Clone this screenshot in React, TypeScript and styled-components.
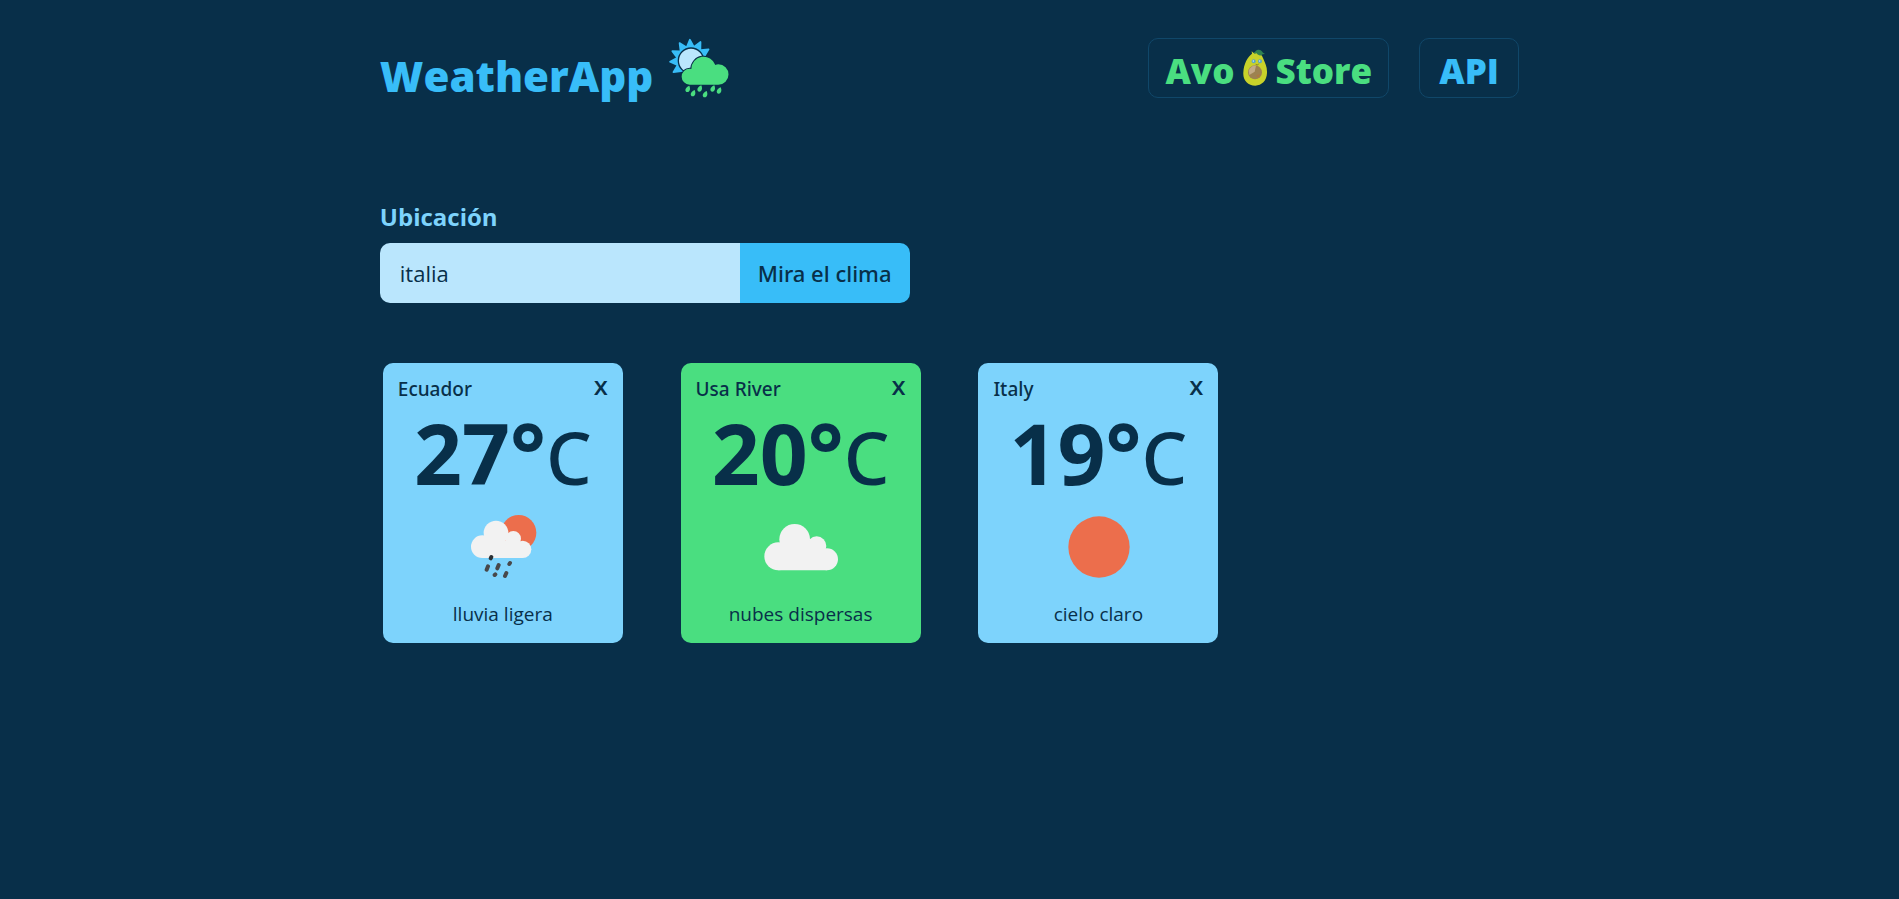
import React, { useState } from "react";
import styled, { createGlobalStyle } from "styled-components";

const sky = {
  night: "#082f49",
  line: "#104769",
  strong: "#38bdf8",
  soft: "#7dd3fc",
  pale: "#bae6fd",
  green: "#4ade80",
};

const mediumFont = `"Segoe UI", "Noto Sans", "Open Sans", sans-serif`;

const GlobalStyle = createGlobalStyle`
  *, *::before, *::after { box-sizing: border-box; }
  body {
    margin: 0;
    min-height: 100vh;
    background: ${sky.night};
    color: ${sky.night};
    font-family: "Segoe UI", "Open Sans", "Noto Sans", sans-serif;
  }
  button, input { font: inherit; color: inherit; border: 0; margin: 0; padding: 0; }
  h1, h2, p { margin: 0; }
`;

const Page = styled.div`
  width: 60%;
  min-width: 320px;
  margin: 0 auto;
`;

const Header = styled.header`
  display: flex;
  flex-wrap: wrap;
  justify-content: space-between;
  gap: 24px;
  padding-top: 38px;
`;

const Brand = styled.div`
  display: flex;
  gap: 16px;
`;

const Title = styled.h1`
  padding-top: 8px;
  color: ${sky.strong};
  font-size: 42px;
  font-weight: 800;
  line-height: 60px;
`;

const LogoArt = styled.svg`
  width: 60px;
  height: 60px;
`;

const Nav = styled.nav`
  display: flex;
  gap: 30px;
`;

const NavLink = styled.a<{ $color: string }>`
  display: flex;
  align-items: center;
  justify-content: center;
  gap: 8px;
  min-width: 100px;
  height: 60px;
  padding: 0 16px;
  border: 1px solid ${sky.line};
  border-radius: 10px;
  color: ${(p) => p.$color};
  font-size: 35px;
  font-weight: 800;
  line-height: 52px;
  text-decoration: none;
`;

const NavText = styled.span`
  padding-top: 6px;
`;

const AvocadoArt = styled.svg`
  width: 25px;
  height: 38px;
`;

const SearchForm = styled.form`
  display: flex;
  flex-direction: column;
  align-items: flex-start;
  padding-top: 95px;
`;

const Label = styled.label`
  color: ${sky.soft};
  font-size: 24px;
  font-weight: 700;
  line-height: 32px;
  padding-bottom: 10px;
`;

const Field = styled.div`
  display: flex;
  height: 60px;
  border-radius: 10px;
  overflow: hidden;
  font-size: 22px;
`;

const TextInput = styled.input`
  width: 360px;
  padding: 0 20px;
  background: ${sky.pale};
  font-weight: 400;
  outline: none;
`;

const Submit = styled.button`
  padding: 0 18px;
  background: ${sky.strong};
  font-family: ${mediumFont};
  font-weight: 500;
  cursor: pointer;
`;

const Cards = styled.main`
  display: grid;
  grid-template-columns: repeat(auto-fill, 240px);
  justify-content: space-between;
  gap: 40px;
  padding: 60px 3px;
`;

const Card = styled.article<{ $color: string }>`
  display: flex;
  flex-direction: column;
  align-items: center;
  min-height: 280px;
  padding: 12px 15px 15px;
  border-radius: 10px;
  background: ${(p) => p.$color};
`;

const CardTop = styled.div`
  display: flex;
  align-items: flex-start;
  justify-content: space-between;
  width: 100%;
  height: 28px;
`;

const City = styled.h2`
  font-family: ${mediumFont};
  font-size: 19px;
  font-weight: 500;
  line-height: 28px;
`;

const Close = styled.button`
  background: none;
  font-family: ${mediumFont};
  font-size: 26px;
  font-weight: 500;
  line-height: 20px;
  cursor: pointer;
`;

const Temperature = styled.p`
  font-size: 84px;
  font-weight: 700;
  line-height: 99px;
  white-space: nowrap;
`;

const Unit = styled.span`
  font-family: ${mediumFont};
  font-size: 72px;
  font-weight: 500;
`;

const WeatherArt = styled.svg`
  width: 80px;
  height: 80px;
`;

const Summary = styled.p`
  margin-top: auto;
  font-size: 19px;
  font-weight: 400;
  line-height: 28px;
`;

const rays = [-213, -183, -153, -123, -93, -63, -33].map((deg) => {
  const point = (r: number, a: number) => {
    const t = (a * Math.PI) / 180;
    return `${(93 + r * Math.cos(t)).toFixed(1)},${(92 + r * Math.sin(t)).toFixed(1)}`;
  };
  return `${point(43, deg - 14)} ${point(63, deg)} ${point(43, deg + 14)}`;
});

const drops = [[83, 177], [99, 190], [119, 176], [135, 193], [158, 176], [177, 182]];

const Logo = () => (
  <LogoArt viewBox="27 24 180 180" aria-hidden="true">
    <g fill={sky.strong} stroke={sky.strong} strokeWidth="5" strokeLinejoin="round">
      {rays.map((r) => <polygon key={r} points={r} />)}
    </g>
    <circle cx="93" cy="92" r="43" fill={sky.strong} />
    <circle cx="93" cy="92" r="38" fill={sky.pale} stroke={sky.night} strokeWidth="4" />
    <path
      d="M89 164a24 24 0 0 1 0-48q3 0 5 1a37 37 0 0 1 72-12q4-2 9-2a30 30 0 0 1 0 61z"
      fill={sky.green}
      stroke={sky.night}
      strokeWidth="6"
      paintOrder="stroke"
    />
    {drops.map(([x, y]) => (
      <path key={x} d={`M${x + 5} ${y - 10}c4 9 2 19-6 19c-9 0-8-14 6-19z`} fill={sky.green} />
    ))}
  </LogoArt>
);

const Avocado = () => (
  <AvocadoArt viewBox="33 22 75 114" aria-hidden="true">
    <path d="M60 36l-1-7l6 5c12-4 24 2 29 17c5 12 12 25 11 43c-1 24-16 37-35 38c-23 0-38-17-36-40c1-24 12-46 26-56z" fill="#c8d22a" />
    <path d="M66 37c2-9 10-15 17-12c5 0 7 5 10 8l6 4l-7 1c-5 6-14 4-18-3z" fill="#2f8052" />
    <circle cx="69" cy="92" r="21" fill="#9d8250" />
    <path d="M50 88a20 20 0 0 1 22-16l-4 18l-16 10z" fill="#c3ab86" />
    <path d="M72 101l13-3l-7 10z" fill="#b07840" />
    <circle cx="65" cy="59" r="6" fill="#5aa7c6" />
    <circle cx="84" cy="59" r="6" fill="#5aa7c6" />
    <circle cx="64" cy="58" r="2" fill="#dff3f7" />
    <circle cx="83" cy="58" r="2" fill="#dff3f7" />
    <path d="M71 68l6 2l3-4" fill="none" stroke="#8b8a24" strokeWidth="3" />
  </AvocadoArt>
);

type Sky = "rain" | "clouds" | "clear";

const WeatherIcon = ({ kind }: { kind: Sky }) => {
  if (kind === "rain")
    return (
      <WeatherArt viewBox="264 453 240 240" aria-hidden="true">
        <circle cx="431" cy="530" r="53" fill="#ec6e4c" />
        <g fill="#f2f2f2">
          <circle cx="322" cy="572" r="34" />
          <circle cx="363" cy="531" r="37" />
          <circle cx="415" cy="548" r="23" />
          <circle cx="443" cy="580" r="26" />
          <path d="M322 560h41l52-12l28 20v38H322z" />
        </g>
        <g stroke="#48484a" strokeWidth="12" strokeLinecap="round">
          <path d="M339 631l-4 10M371 627l-4 10M394 651l-4 9M405 621l-2 3M361 655l-2 2" />
          <path d="M349 603l-2 4" stroke="#2a2f33" />
        </g>
      </WeatherArt>
    );
  if (kind === "clouds")
    return (
      <WeatherArt viewBox="273 453 240 240" aria-hidden="true">
        <g fill="#f2f2f2">
          <circle cx="325" cy="601" r="42" />
          <circle cx="374" cy="550" r="46" />
          <circle cx="440" cy="570" r="29" />
          <circle cx="471" cy="610" r="33" />
          <path d="M325 590l49-40l66 20l31 20v53H325z" />
        </g>
      </WeatherArt>
    );
  return (
    <WeatherArt viewBox="279 453 240 240" aria-hidden="true">
      <circle cx="402" cy="573" r="92" fill="#ec6e4c" />
    </WeatherArt>
  );
};

const places: { city: string; temp: number; kind: Sky; text: string }[] = [
  { city: "Ecuador", temp: 27, kind: "rain", text: "lluvia ligera" },
  { city: "Usa River", temp: 20, kind: "clouds", text: "nubes dispersas" },
  { city: "Italy", temp: 19, kind: "clear", text: "cielo claro" },
];

export default function App() {
  const [query, setQuery] = useState("italia");
  return (
    <>
      <GlobalStyle />
      <Page>
        <Header>
          <Brand>
            <Title>WeatherApp</Title>
            <Logo />
          </Brand>
          <Nav>
            <NavLink href="#store" $color={sky.green}>
              <NavText>Avo</NavText>
              <Avocado />
              <NavText>Store</NavText>
            </NavLink>
            <NavLink href="#api" $color={sky.strong}>
              <NavText>API</NavText>
            </NavLink>
          </Nav>
        </Header>
        <SearchForm onSubmit={(e) => e.preventDefault()}>
          <Label htmlFor="place">Ubicación</Label>
          <Field>
            <TextInput id="place" value={query} onChange={(e) => setQuery(e.target.value)} />
            <Submit type="submit">Mira el clima</Submit>
          </Field>
        </SearchForm>
        <Cards>
          {places.map((p, i) => (
            <Card key={p.city} $color={i % 2 ? sky.green : sky.soft}>
              <CardTop>
                <City>{p.city}</City>
                <Close type="button">x</Close>
              </CardTop>
              <Temperature>
                {p.temp}°<Unit>C</Unit>
              </Temperature>
              <WeatherIcon kind={p.kind} />
              <Summary>{p.text}</Summary>
            </Card>
          ))}
        </Cards>
      </Page>
    </>
  );
}
